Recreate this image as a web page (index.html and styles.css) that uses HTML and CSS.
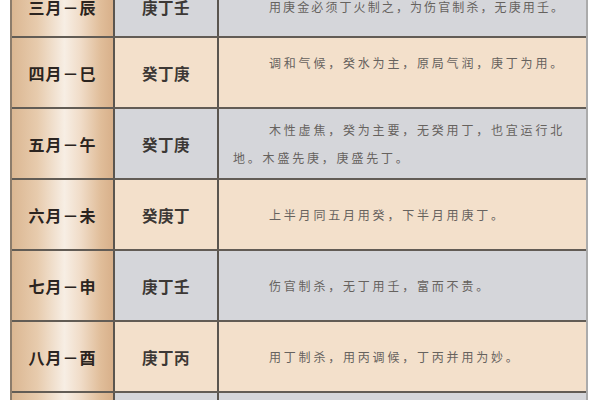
FILE: index.html
```html
<!DOCTYPE html>
<html lang="zh">
<head>
<meta charset="utf-8">
<link rel="stylesheet" href="styles.css">
</head>
<body>
<div class="table">
  <div class="row gray first">
    <div class="month">三月－辰</div>
    <div class="gods">庚丁壬</div>
    <div class="desc nowrap">用庚金必须丁火制之，为伤官制杀，无庚用壬。</div>
  </div>
  <div class="row beige">
    <div class="month">四月－巳</div>
    <div class="gods">癸丁庚</div>
    <div class="desc raised">调和气候，癸水为主，原局气润，庚丁为用。</div>
  </div>
  <div class="row gray">
    <div class="month">五月－午</div>
    <div class="gods">癸丁庚</div>
    <div class="desc">木性虚焦，癸为主要，无癸用丁，也宜运行北地。木盛先庚，庚盛先丁。</div>
  </div>
  <div class="row beige">
    <div class="month">六月－未</div>
    <div class="gods">癸庚丁</div>
    <div class="desc">上半月同五月用癸，下半月用庚丁。</div>
  </div>
  <div class="row gray">
    <div class="month">七月－申</div>
    <div class="gods">庚丁壬</div>
    <div class="desc">伤官制杀，无丁用壬，富而不贵。</div>
  </div>
  <div class="row beige">
    <div class="month">八月－酉</div>
    <div class="gods">庚丁丙</div>
    <div class="desc">用丁制杀，用丙调候，丁丙并用为妙。</div>
  </div>
  <div class="row gray">
    <div class="month">九月－戌</div>
    <div class="gods">甲癸</div>
    <div class="desc">甲木疏土，癸水滋润。</div>
  </div>
</div>
</body>
</html>
```

FILE: styles.css
```css
html, body {
  margin: 0;
  padding: 0;
  background: #ffffff;
  overflow: hidden;
}
body {
  width: 600px;
  height: 400px;
  font-family: "Noto Sans CJK SC", "Noto Sans", sans-serif;
}
.table {
  margin: -22px 0 0 10px;
  width: 578px;
  box-sizing: border-box;
  border-left: 2px solid #8c7c6b;
  border-right: 2px solid #ababab;
}
.row {
  display: grid;
  grid-template-columns: 103px 104px 1fr;
  height: 71px;
  box-sizing: border-box;
  border-bottom: 2px solid #625c55;
}
.row.first {
  height: 60px;
}
.gray { background: #d5d6da; }
.beige { background: #f3e0cb; }
.month, .gods {
  display: flex;
  align-items: center;
  justify-content: center;
  border-right: 2px solid #5a554f;
  font-weight: 700;
}
.month {
  background: linear-gradient(90deg, #dbb792 0%, #e7cbad 25%, #f7eee4 52%, #f0dcc8 68%, #e0bd99 88%, #d8b08a 100%);
  color: #2b2420;
  font-size: 16px;
  letter-spacing: 1px;
}
.gods {
  color: #3c3835;
  font-size: 15.5px;
  letter-spacing: 0.5px;
}
.desc {
  display: flex;
  align-items: center;
  box-sizing: border-box;
  padding: 0 15px 0 14px;
  color: #66625e;
  font-size: 12px;
  letter-spacing: 2.8px;
  line-height: 28px;
  text-indent: 36px;
}
.desc.nowrap {
  white-space: nowrap;
  letter-spacing: 2.1px;
}
.desc.raised {
  padding-bottom: 20px;
}
```
